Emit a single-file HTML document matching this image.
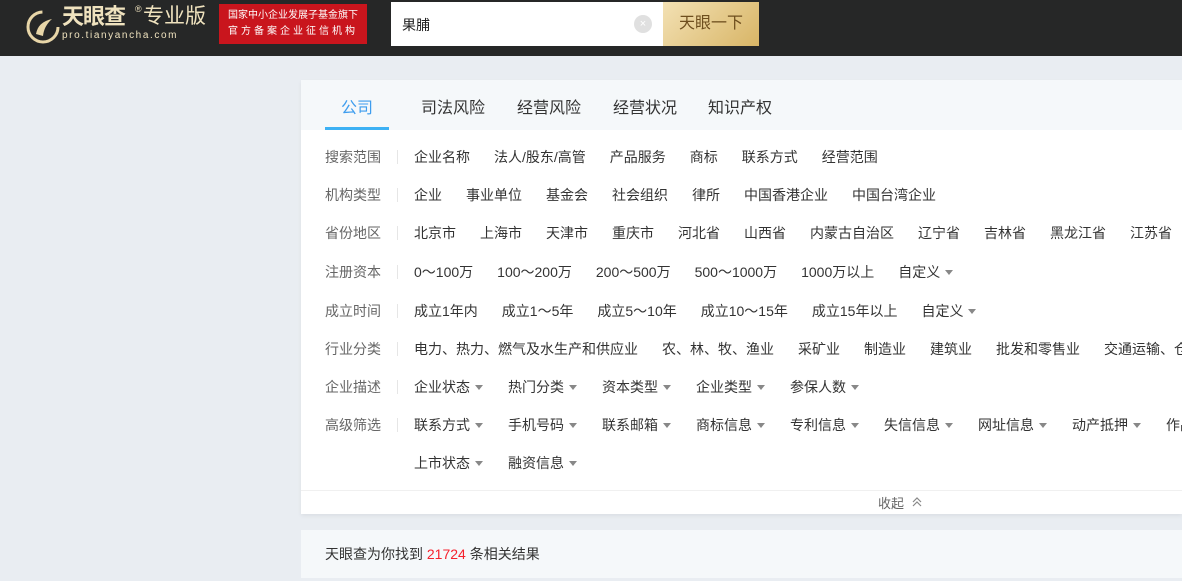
<!DOCTYPE html>
<html><head><meta charset="utf-8"><style>
*{margin:0;padding:0;box-sizing:border-box}
body{width:1182px;height:581px;overflow:hidden;background:#e9edf2;font-family:"Liberation Sans","Noto Sans CJK SC",sans-serif;position:relative;color:#333}
.hd{position:absolute;left:0;top:0;width:1182px;height:56px;background:#262727}
.a{position:absolute;white-space:nowrap}
.panel{position:absolute;left:301px;top:80px;width:881px;height:434px;background:#fff;box-shadow:0 2px 4px rgba(0,0,0,.06)}
.tabs{position:absolute;left:0;top:0;width:881px;height:50px;background:#f5f8fa}
.tab{position:absolute;top:14px;font-size:16px;color:#333}
.row{position:absolute;left:24px;height:20px;font-size:14px;display:flex;align-items:center;white-space:nowrap}
.lb{color:#666;width:73px;position:relative;font-size:14px}
.lb:after{content:"";position:absolute;right:0;top:3px;height:14px;border-right:1px solid #e6e6e6}
.it{margin-left:16px;margin-right:8px;color:#333}
.dd:after{content:"";display:inline-block;margin-left:5px;margin-right:1px;border:4px solid transparent;border-top:5px solid #888;vertical-align:-2px}
</style></head><body>
<div class="hd">
<svg class="a" style="left:26px;top:10px" width="34" height="34" viewBox="0 0 34 34"><circle cx="17" cy="17" r="15" fill="none" stroke="#e8d6a8" stroke-width="3" stroke-dasharray="70 25"/><path d="M10 24 Q12 12 26 9 Q18 16 17 26 Z" fill="#e8d6a8"/></svg>
<div class="a" style="left:62px;top:5px;font-size:22px;line-height:24px;font-weight:bold;color:#efe2be;letter-spacing:-1px">天眼查</div>
<div class="a" style="left:135px;top:4px;font-size:9px;color:#efe2be">®</div>
<div class="a" style="left:143px;top:5px;font-size:21px;line-height:24px;color:#efe2be">专业版</div>
<div class="a" style="left:62px;top:30px;font-size:10px;line-height:12px;color:#efe2be;letter-spacing:1.6px">pro.tianyancha.com</div>
<div class="a" style="left:219px;top:4px;width:148px;height:40px;background:#c9151d;color:#fff;font-size:10px;text-align:center;line-height:16px;padding-top:4px">国家中小企业发展子基金旗下<br><span style="letter-spacing:3px">官方备案企业征信机构</span></div>
<div class="a" style="left:391px;top:2px;width:272px;height:44px;background:#fff"></div>
<div class="a" style="left:402px;top:15px;font-size:14px;color:#222">果脯</div>
<div class="a" style="left:634px;top:15px;width:18px;height:18px;border-radius:50%;background:#e0e0e0;color:#fff;font-size:11px;text-align:center;line-height:18px">×</div>
<div class="a" style="left:663px;top:2px;width:96px;height:44px;background:linear-gradient(135deg,#f3e1b4,#d8b566);color:#6e4e1e;font-size:16px;text-align:center;line-height:44px">天眼一下</div>
</div>
<div class="panel">
<div class="tabs">
<div class="tab" style="left:40px;color:#3e9dee">公司</div>
<div class="a" style="left:24px;top:47px;width:64px;height:3px;background:#3db1f4"></div>
<div class="tab" style="left:120px">司法风险</div>
<div class="tab" style="left:216px">经营风险</div>
<div class="tab" style="left:312px">经营状况</div>
<div class="tab" style="left:407px">知识产权</div>
</div>
<div class="row" style="top:67px"><span class="lb">搜索范围</span><span class="it">企业名称</span><span class="it">法人/股东/高管</span><span class="it">产品服务</span><span class="it">商标</span><span class="it">联系方式</span><span class="it">经营范围</span></div>
<div class="row" style="top:105px"><span class="lb">机构类型</span><span class="it">企业</span><span class="it">事业单位</span><span class="it">基金会</span><span class="it">社会组织</span><span class="it">律所</span><span class="it">中国香港企业</span><span class="it">中国台湾企业</span></div>
<div class="row" style="top:143px"><span class="lb">省份地区</span><span class="it">北京市</span><span class="it">上海市</span><span class="it">天津市</span><span class="it">重庆市</span><span class="it">河北省</span><span class="it">山西省</span><span class="it">内蒙古自治区</span><span class="it">辽宁省</span><span class="it">吉林省</span><span class="it">黑龙江省</span><span class="it">江苏省</span></div>
<div class="row" style="top:182px"><span class="lb">注册资本</span><span class="it">0～100万</span><span class="it">100～200万</span><span class="it">200～500万</span><span class="it">500～1000万</span><span class="it">1000万以上</span><span class="it dd">自定义</span></div>
<div class="row" style="top:221px"><span class="lb">成立时间</span><span class="it">成立1年内</span><span class="it">成立1～5年</span><span class="it">成立5～10年</span><span class="it">成立10～15年</span><span class="it">成立15年以上</span><span class="it dd">自定义</span></div>
<div class="row" style="top:259px"><span class="lb">行业分类</span><span class="it">电力、热力、燃气及水生产和供应业</span><span class="it">农、林、牧、渔业</span><span class="it">采矿业</span><span class="it">制造业</span><span class="it">建筑业</span><span class="it">批发和零售业</span><span class="it">交通运输、仓储</span></div>
<div class="row" style="top:297px"><span class="lb">企业描述</span><span class="it dd">企业状态</span><span class="it dd">热门分类</span><span class="it dd">资本类型</span><span class="it dd">企业类型</span><span class="it dd">参保人数</span></div>
<div class="row" style="top:335px"><span class="lb">高级筛选</span><span class="it dd">联系方式</span><span class="it dd">手机号码</span><span class="it dd">联系邮箱</span><span class="it dd">商标信息</span><span class="it dd">专利信息</span><span class="it dd">失信信息</span><span class="it dd">网址信息</span><span class="it dd">动产抵押</span><span class="it">作品</span></div>
<div class="row" style="top:373px"><span class="lb" style="visibility:hidden">高级筛选</span><span class="it dd">上市状态</span><span class="it dd">融资信息</span></div>
<div class="a" style="left:0;top:410px;width:881px;border-top:1px solid #f0f0f0"></div>
<div class="a" style="left:577px;top:413px;font-size:13px;color:#666">收起</div>
<svg class="a" style="left:610px;top:417px" width="12" height="10" viewBox="0 0 12 10"><path d="M2 5 L6 1 L10 5 M2 9 L6 5 L10 9" fill="none" stroke="#888" stroke-width="1.2"/></svg>
</div>
<div class="a" style="left:301px;top:530px;width:881px;height:48px;background:#f5f8fa"></div>
<div class="a" style="left:325px;top:544px;font-size:14px;color:#333">天眼查为你找到 <span style="color:#f5222d">21724</span> 条相关结果</div>
</body></html>
